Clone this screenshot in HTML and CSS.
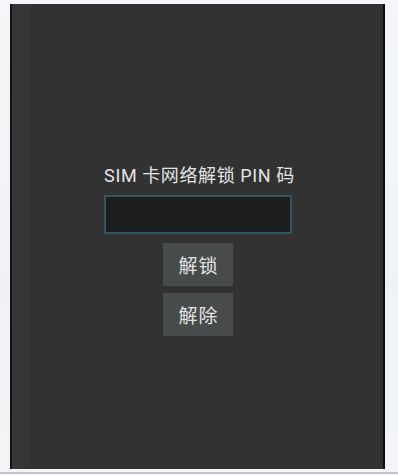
FILE: index.html
```html
<!DOCTYPE html>
<html>
<head>
<meta charset="utf-8">
<link rel="stylesheet" href="styles.css">
</head>
<body>
<div class="page">
  <div class="screen">
    <div class="stripe"></div>
    <div class="content">
      <div class="title">SIM 卡网络解锁 PIN 码</div>
      <div class="input"></div>
      <div class="btn">解锁</div>
      <div class="btn">解除</div>
    </div>
  </div>
  <div class="bottom-line"></div>
</div>
</body>
</html>
```
FILE: styles.css
```css
html, body {
  margin: 0;
  padding: 0;
}
body {
  width: 398px;
  height: 475px;
  overflow: hidden;
  background: linear-gradient(180deg, #f4f6f9 0%, #eef2f6 60%, #f2f4f7 100%);
  font-family: "Roboto", "Noto Sans CJK SC", sans-serif;
}
.page {
  display: flex;
  flex-direction: column;
  height: 475px;
}
.screen {
  margin: 4px 13px 0 10px;
  height: 465px;
  background: #323232;
  border-left: 2px solid #141414;
  border-right: 2px solid #0c0c0c;
  display: flex;
  box-sizing: border-box;
}
.stripe {
  width: 18px;
  background: #363636;
  flex: none;
}
.content {
  flex: 1;
  display: flex;
  flex-direction: column;
  align-items: center;
  padding-top: 160px;
  margin-left: -18px;
}
.title {
  color: #e4e4e4;
  font-size: 18px;
  letter-spacing: 0.6px;
  line-height: 24px;
  height: 31px;
  padding-left: 4px;
}
.input {
  width: 188px;
  height: 39px;
  box-sizing: border-box;
  border: 2px solid #2f5860;
  background: #1d1e1e;
  margin-left: 0;
}
.btn {
  width: 70px;
  height: 43px;
  margin-top: 9px;
  background: #474b4b;
  color: #e4e4e4;
  font-size: 19px;
  letter-spacing: 1px;
  padding-left: 1px;
  box-sizing: border-box;
  display: flex;
  align-items: center;
  justify-content: center;
  margin-left: 1px;
}
.btn + .btn {
  margin-top: 7px;
}
.bottom-line {
  margin-top: 3px;
  height: 2px;
  background: #c3c7cc;
}
```
